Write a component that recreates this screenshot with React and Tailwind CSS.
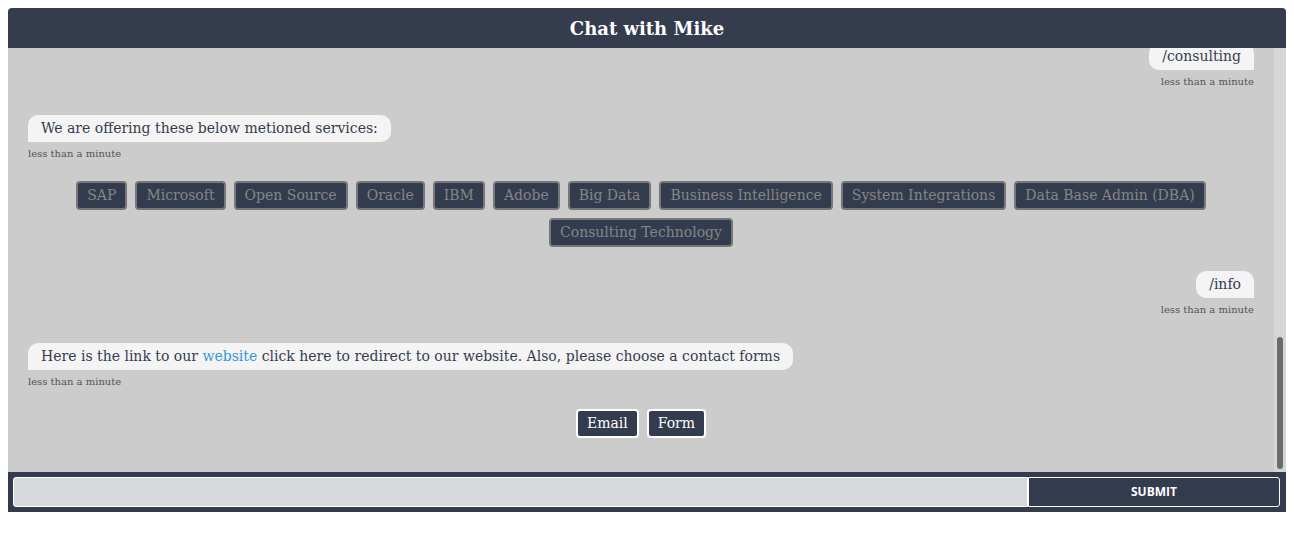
import React, { useEffect, useRef } from "react";

const serif = "font-['DejaVu_Serif',serif]";

const history = [
  { from: "bot", text: "Hello! I am Mike, your virtual assistant." },
  {
    from: "bot",
    text: "How can I help you today? Please choose one of the options below.",
    options: ["Services", "Consulting", "Info", "Contact"],
  },
  { from: "user", text: "/services" },
  {
    from: "bot",
    text: "These are the main areas we work in:",
    options: ["Staffing", "Consulting", "Training", "Support"],
  },
  { from: "user", text: "/consulting" },
  {
    from: "bot",
    text: "We are offering these below metioned services:",
    options: [
      "SAP",
      "Microsoft",
      "Open Source",
      "Oracle",
      "IBM",
      "Adobe",
      "Big Data",
      "Business Intelligence",
      "System Integrations",
      "Data Base Admin (DBA)",
      "Consulting Technology",
    ],
  },
  { from: "user", text: "/info" },
  {
    from: "bot",
    text: (
      <>
        Here is the link to our <span className="text-[#3498db]">website</span> click here to redirect to our
        website. Also, please choose a contact forms
      </>
    ),
    options: ["Email", "Form"],
    light: true,
  },
];

function Message({ msg }) {
  const user = msg.from === "user";
  return (
    <div className={user ? "flex flex-col items-end" : "flex flex-col items-start"}>
      <div
        className={
          user
            ? "h-[27px] leading-[27px] px-[13px] bg-[#f4f4f4] text-[14px] text-[#343d4f] whitespace-nowrap rounded-[10px] rounded-br-none"
            : "h-[27px] leading-[27px] px-[13px] bg-[#f4f4f4] text-[14px] text-[#343d4f] whitespace-nowrap rounded-[10px] rounded-bl-none"
        }
      >
        {msg.text}
      </div>
      <div className="mt-[6px] text-[10px] leading-[12px] text-[#555555]">less than a minute</div>
    </div>
  );
}

function Options({ items, light }) {
  return (
    <div className="flex flex-wrap justify-center gap-2">
      {items.map((o) => (
        <button
          key={o}
          className={
            light
              ? "h-[29px] px-[9px] bg-[#333c4e] border-2 border-white rounded-[4px] text-[14px] text-white"
              : "h-[29px] px-[9px] bg-[#333c4e] border-2 border-[#777777] rounded-[4px] text-[14px] text-[#858585]"
          }
        >
          {o}
        </button>
      ))}
    </div>
  );
}

export default function App() {
  const scrollRef = useRef(null);

  useEffect(() => {
    const el = scrollRef.current;
    if (el) el.scrollTop = el.scrollHeight;
  }, []);

  return (
    <div className={`m-2 h-[504px] flex flex-col ${serif}`}>
      <header className="h-10 flex-none flex items-center justify-center bg-[#343c4e] rounded-t-[4px]">
        <h1 className="text-[18px] font-bold text-white">Chat with Mike</h1>
      </header>

      <div className="flex-1 min-h-0 flex bg-[#cccccc]">
        <div ref={scrollRef} className="flex-1 min-w-0 overflow-hidden">
          <div className="px-5 pt-5 pb-[34px]">
            {history.map((m, i) => {
              const last = i === history.length - 1;
              if (m.options) {
                return (
                  <div key={i}>
                    <div className="mb-[21px]">
                      <Message msg={m} />
                    </div>
                    <div className={last ? "" : "mb-6"}>
                      <Options items={m.options} light={m.light} />
                    </div>
                  </div>
                );
              }
              return (
                <div key={i} className="mb-[27px]">
                  <Message msg={m} />
                </div>
              );
            })}
          </div>
        </div>
        {/* scrollbar */}
        <div className="w-3 flex-none flex flex-col justify-end items-center p-[3px] bg-[#d6d6d6]">
          <div className="w-[6px] h-[132px] rounded-full bg-[#6b6b6b]" />
        </div>
      </div>

      <footer className="h-10 flex-none flex bg-[#333b4d] pl-[5px] pr-[6px] py-[5px]">
        <input
          className="flex-1 min-w-0 bg-[#d7d9dc] border border-white rounded-l-[3px] outline-none px-2"
          type="text"
        />
        <button className="w-[252px] flex-none bg-[#333c4e] border border-white rounded-r-[3px] text-white text-[12px] font-bold font-['Open_Sans',sans-serif]">
          SUBMIT
        </button>
      </footer>
    </div>
  );
}
